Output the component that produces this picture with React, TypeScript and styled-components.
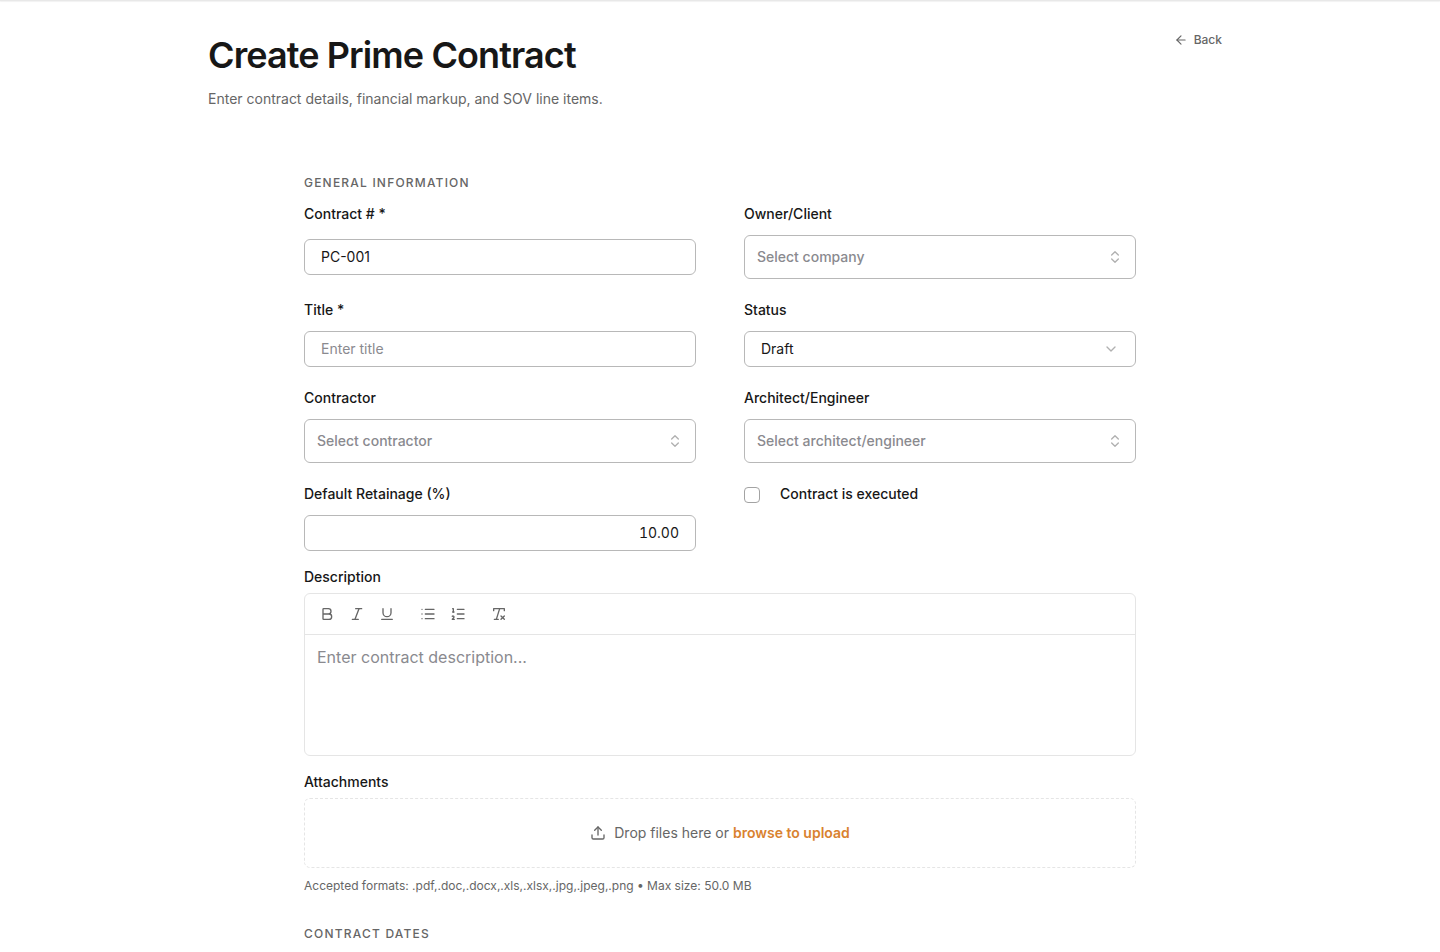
import React from "react";
import styled, { createGlobalStyle, css } from "styled-components";
import {
  ArrowLeft,
  Bold,
  ChevronDown,
  ChevronsUpDown,
  Italic,
  List,
  ListOrdered,
  RemoveFormatting,
  Underline,
  Upload,
} from "lucide-react";

const color = {
  text: "#171717",
  muted: "#666666",
  placeholder: "#8a8a8f",
  border: "#b8b8b8",
  hairline: "#e5e5e5",
  accent: "#d9822f",
  icon: "#b0b0b0",
};

const GlobalStyle = createGlobalStyle`
  *, *::before, *::after { box-sizing: border-box; }
  body {
    margin: 0;
    background: #ffffff;
    color: ${color.text};
    font-family: Inter, "Liberation Sans", sans-serif;
    font-size: 14px;
    line-height: 20px;
    -webkit-font-smoothing: antialiased;
  }
  button, input, select, textarea { font: inherit; color: inherit; letter-spacing: inherit; }
`;

const TopBar = styled.div`
  height: 1px;
  background: #e8e8e8;
  box-shadow: 0 1px 1px rgba(0, 0, 0, 0.06);
`;

const Page = styled.main`
  max-width: 1024px;
  margin: 0 auto;
  padding: 23px 0 24px;
`;

const PageHeader = styled.header`
  display: flex;
  justify-content: space-between;
  align-items: flex-start;
`;

const Heading = styled.div`
  display: flex;
  flex-direction: column;
  gap: 12px;
  padding-top: 9px;
`;

const Title = styled.h1`
  margin: 0;
  font-size: 36px;
  line-height: 44px;
  font-weight: 600;
  letter-spacing: -0.025em;
`;

const Subtitle = styled.p`
  margin: 0;
  color: ${color.muted};
`;

const BackButton = styled.button`
  display: flex;
  align-items: center;
  gap: 6px;
  height: 32px;
  padding: 0 10px;
  border: 0;
  border-radius: 6px;
  background: none;
  color: ${color.muted};
  font-size: 12px;
  font-weight: 500;
  cursor: pointer;
`;

const Form = styled.form`
  display: flex;
  flex-direction: column;
  gap: 32px;
  max-width: 896px;
  margin: 0 auto;
  padding: 66px 32px 0;
`;

const Section = styled.section`
  display: flex;
  flex-direction: column;
  gap: 16px;
`;

const SectionTitle = styled.h2`
  margin: 0;
  color: ${color.muted};
  font-size: 12px;
  line-height: 16px;
  font-weight: 500;
  letter-spacing: 0.1em;
  text-transform: uppercase;
`;

const FieldGrid = styled.div`
  display: grid;
  grid-template-columns: repeat(2, minmax(0, 1fr));
  gap: 24px 48px;
`;

const Field = styled.div`
  display: flex;
  flex-direction: column;
  gap: 14px;
`;

const Label = styled.label`
  font-weight: 500;
  line-height: 14px;
`;

const ControlSlot = styled.div`
  flex: 1;
  display: flex;
  align-items: center;
`;

const control = css`
  width: 100%;
  border: 1px solid ${color.border};
  border-radius: 6px;
  background: #ffffff;
  outline: none;
`;

const TextInput = styled.input<{ $numeric?: boolean }>`
  ${control}
  height: 36px;
  padding: 0 16px 2px;
  text-align: ${(p) => (p.$numeric ? "right" : "left")};
  font-variant-numeric: ${(p) => (p.$numeric ? "tabular-nums" : "normal")};
  &::placeholder { color: ${color.placeholder}; opacity: 1; }
`;

const SelectFrame = styled.div<{ $inset: number }>`
  position: relative;
  width: 100%;
  svg {
    position: absolute;
    right: ${(p) => p.$inset + 1}px;
    top: 50%;
    margin-top: -8px;
    color: ${color.icon};
    pointer-events: none;
  }
`;

const Select = styled.select<{ $picker?: boolean }>`
  ${control}
  display: block;
  appearance: none;
  height: ${(p) => (p.$picker ? 44 : 36)}px;
  padding: 0 ${(p) => (p.$picker ? 12 : 16)}px;
  color: ${(p) => (p.$picker ? color.placeholder : color.text)};
  font-weight: ${(p) => (p.$picker ? 500 : 400)};
`;

const CheckRow = styled.div`
  display: flex;
  align-items: flex-start;
  gap: 20px;
`;

const Checkbox = styled.input`
  appearance: none;
  width: 16px;
  height: 16px;
  margin: 0;
  border: 1px solid #a3a3a3;
  border-radius: 4px;
  background: #ffffff;
  &:checked { background: ${color.accent}; }
`;

const Block = styled.div`
  display: flex;
  flex-direction: column;
  gap: 6px;
`;

const BlockLabel = styled(Label)`
  line-height: 20px;
`;

const Editor = styled.div`
  border: 1px solid ${color.hairline};
  border-radius: 6px;
  overflow: hidden;
`;

const Toolbar = styled.div`
  display: flex;
  gap: 13px;
  padding: 6px 8px;
  border-bottom: 1px solid ${color.hairline};
`;

const ToolGroup = styled.div`
  display: flex;
  gap: 2px;
`;

const ToolButton = styled.button`
  display: grid;
  place-items: center;
  width: 28px;
  height: 28px;
  padding: 0;
  border: 0;
  border-radius: 4px;
  background: none;
  color: ${color.muted};
  cursor: pointer;
`;

const EditorArea = styled.textarea`
  display: block;
  width: 100%;
  height: 120px;
  padding: 10px 12px;
  border: 0;
  outline: none;
  resize: none;
  background: none;
  font-size: 16px;
  line-height: 24px;
  &::placeholder { color: ${color.placeholder}; opacity: 1; }
`;

const DropZone = styled.div`
  display: flex;
  align-items: center;
  justify-content: center;
  gap: 8px;
  height: 70px;
  border: 1px dashed ${color.hairline};
  border-radius: 6px;
  color: ${color.muted};
`;

const BrowseButton = styled.button`
  padding: 0;
  border: 0;
  background: none;
  color: ${color.accent};
  font-weight: 600;
  cursor: pointer;
`;

const Hint = styled.p`
  margin: 4px 0 0;
  color: ${color.muted};
  font-size: 12px;
  line-height: 16px;
`;

const Details = styled.div`
  display: flex;
  flex-direction: column;
  gap: 16px;
`;

const toolGroups = [
  [
    { name: "Bold", Icon: Bold },
    { name: "Italic", Icon: Italic },
    { name: "Underline", Icon: Underline },
  ],
  [
    { name: "Bullet list", Icon: List },
    { name: "Numbered list", Icon: ListOrdered },
  ],
  [{ name: "Clear formatting", Icon: RemoveFormatting }],
];

type PickerProps = { id: string; label: string; placeholder: string };

function Picker({ id, label, placeholder }: PickerProps) {
  return (
    <Field>
      <Label htmlFor={id}>{label}</Label>
      <ControlSlot>
        <SelectFrame $inset={12}>
          <Select id={id} $picker defaultValue="">
            <option value="">{placeholder}</option>
          </Select>
          <ChevronsUpDown size={16} />
        </SelectFrame>
      </ControlSlot>
    </Field>
  );
}

type InputFieldProps = {
  id: string;
  label: string;
  value?: string;
  placeholder?: string;
  numeric?: boolean;
};

function InputField({ id, label, value, placeholder, numeric }: InputFieldProps) {
  return (
    <Field>
      <Label htmlFor={id}>{label}</Label>
      <ControlSlot>
        <TextInput
          id={id}
          type="text"
          inputMode={numeric ? "decimal" : undefined}
          defaultValue={value}
          placeholder={placeholder}
          $numeric={numeric}
        />
      </ControlSlot>
    </Field>
  );
}

export default function App() {
  return (
    <>
      <GlobalStyle />
      <TopBar />
      <Page>
        <PageHeader>
          <Heading>
            <Title>Create Prime Contract</Title>
            <Subtitle>Enter contract details, financial markup, and SOV line items.</Subtitle>
          </Heading>
          <BackButton type="button">
            <ArrowLeft size={14} />
            Back
          </BackButton>
        </PageHeader>

        <Form onSubmit={(e) => e.preventDefault()}>
          <Section>
            <SectionTitle>General Information</SectionTitle>
            <Details>
              <FieldGrid>
                <InputField id="number" label="Contract # *" value="PC-001" />
                <Picker id="owner" label="Owner/Client" placeholder="Select company" />
                <InputField id="title" label="Title *" placeholder="Enter title" />
                <Field>
                  <Label htmlFor="status">Status</Label>
                  <ControlSlot>
                    <SelectFrame $inset={16}>
                      <Select id="status" defaultValue="draft">
                        <option value="draft">Draft</option>
                      </Select>
                      <ChevronDown size={16} />
                    </SelectFrame>
                  </ControlSlot>
                </Field>
                <Picker id="contractor" label="Contractor" placeholder="Select contractor" />
                <Picker
                  id="architect"
                  label="Architect/Engineer"
                  placeholder="Select architect/engineer"
                />
                <InputField id="retainage" label="Default Retainage (%)" value="10.00" numeric />
                <CheckRow>
                  <Checkbox id="executed" type="checkbox" />
                  <Label htmlFor="executed">Contract is executed</Label>
                </CheckRow>
              </FieldGrid>

              <Block>
                <BlockLabel htmlFor="description">Description</BlockLabel>
                <Editor>
                  <Toolbar role="toolbar" aria-label="Text formatting">
                    {toolGroups.map((group) => (
                      <ToolGroup key={group[0].name}>
                        {group.map(({ name, Icon }) => (
                          <ToolButton key={name} type="button" aria-label={name}>
                            <Icon size={16} strokeWidth={2} />
                          </ToolButton>
                        ))}
                      </ToolGroup>
                    ))}
                  </Toolbar>
                  <EditorArea id="description" placeholder="Enter contract description..." />
                </Editor>
              </Block>

              <Block>
                <BlockLabel as="span">Attachments</BlockLabel>
                <DropZone>
                  <Upload size={16} />
                  <span>
                    Drop files here or <BrowseButton type="button">browse to upload</BrowseButton>
                  </span>
                </DropZone>
                <Hint>Accepted formats: .pdf,.doc,.docx,.xls,.xlsx,.jpg,.jpeg,.png • Max size: 50.0 MB</Hint>
              </Block>
            </Details>
          </Section>

          <Section>
            <SectionTitle>Contract Dates</SectionTitle>
          </Section>
        </Form>
      </Page>
    </>
  );
}
